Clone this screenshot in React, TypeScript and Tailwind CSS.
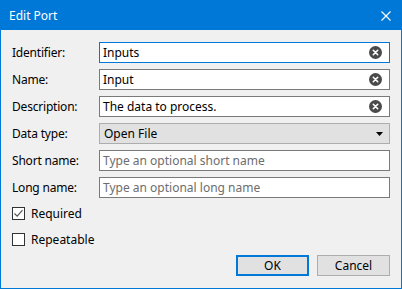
import React from "react";

const font = { fontFamily: '"Noto Sans", "Segoe UI", sans-serif' };

function ClearIcon() {
  return (
    <svg width="13" height="13" viewBox="0 0 13 13" className="shrink-0">
      <circle cx="6.5" cy="6.5" r="6.5" fill="#4a4a4a" />
      <path d="M4.3 4.3 L8.7 8.7 M8.7 4.3 L4.3 8.7" stroke="#fff" strokeWidth="1.6" strokeLinecap="round" />
    </svg>
  );
}

function Row({ label, children }: { label: string; children: React.ReactNode }) {
  return (
    <div className="flex items-center h-[21px]">
      <div className="w-[87px] text-[12px] tracking-[-0.2px] text-[#000]">{label}</div>
      <div className="flex-1 h-full">{children}</div>
    </div>
  );
}

function TextBox({ value, focused, clear, placeholder }: { value?: string; focused?: boolean; clear?: boolean; placeholder?: string }) {
  return (
    <div
      className={`h-full flex items-center bg-white border pl-[3px] pr-[7px] ${focused ? "border-[#0078d7]" : "border-[#7a7a7a]"}`}
    >
      <span className={`flex-1 text-[12px] ${value ? "text-black" : "text-[#6d6d6d]"}`}>{value || placeholder}</span>
      {clear && <ClearIcon />}
    </div>
  );
}

function Check({ checked, label }: { checked?: boolean; label: string }) {
  return (
    <div className="flex items-center gap-[6px] h-[13px]">
      <div className="w-[13px] h-[13px] border border-[#333] bg-white flex items-center justify-center">
        {checked && (
          <svg width="11" height="11" viewBox="0 0 11 11">
            <path d="M1.5 5.5 L4.2 8.2 L9.5 2.2" stroke="#555" strokeWidth="1.2" fill="none" />
          </svg>
        )}
      </div>
      <span className="text-[12px] text-black">{label}</span>
    </div>
  );
}

export default function App() {
  return (
    <div className="w-[402px] h-[289px] bg-[#f0f0f0] border border-[#0078d7] flex flex-col" style={font}>
      <div className="h-[29px] bg-[#0078d7] flex items-center justify-between pl-[8px] pr-[10px] shrink-0">
        <span className="text-white text-[12px]">Edit Port</span>
        <svg width="10" height="10" viewBox="0 0 10 10">
          <path d="M0.5 0.5 L9.5 9.5 M9.5 0.5 L0.5 9.5" stroke="#fff" strokeWidth="1.2" />
        </svg>
      </div>
      <div className="flex-1 flex flex-col px-[11px] pt-[12px]">
        <div className="flex flex-col gap-[6px]">
          <Row label="Identifier:">
            <TextBox value="Inputs" focused clear />
          </Row>
          <Row label="Name:">
            <TextBox value="Input" clear />
          </Row>
          <Row label="Description:">
            <TextBox value="The data to process." clear />
          </Row>
          <Row label="Data type:">
            <div className="h-full flex items-center bg-[#e1e1e1] border border-[#adadad] pl-[4px] pr-[6px]">
              <span className="flex-1 text-[12px] text-black">Open File</span>
              <svg width="7" height="4" viewBox="0 0 7 4">
                <path d="M0 0 H7 L3.5 4 Z" fill="#000" />
              </svg>
            </div>
          </Row>
          <Row label="Short name:">
            <TextBox placeholder="Type an optional short name" />
          </Row>
          <Row label="Long name:">
            <TextBox placeholder="Type an optional long name" />
          </Row>
        </div>
        <div className="flex flex-col gap-[13px] mt-[9px]">
          <Check checked label="Required" />
          <Check label="Repeatable" />
        </div>
        <div className="flex justify-end gap-[8px] mt-[9px]">
          <button className="w-[73px] h-[21px] bg-[#e1e1e1] border-2 border-[#0078d7] text-[12px] text-black">OK</button>
          <button className="w-[73px] h-[21px] bg-[#e1e1e1] border border-[#adadad] text-[12px] text-black">Cancel</button>
        </div>
      </div>
    </div>
  );
}
